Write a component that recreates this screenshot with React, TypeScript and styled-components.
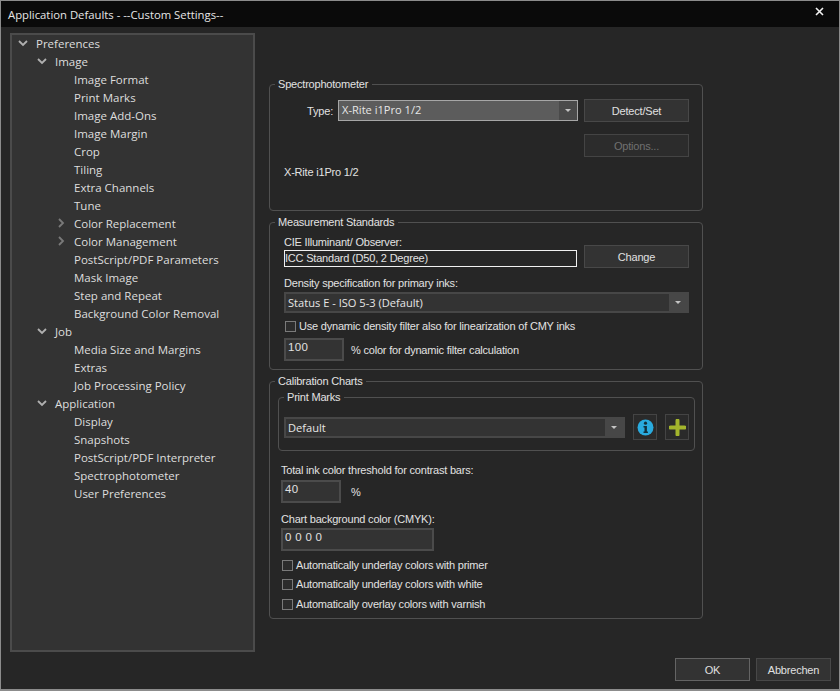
import React from "react"
import styled, { createGlobalStyle } from "styled-components"

const GlobalStyle = createGlobalStyle`
  html, body {
    margin: 0;
    padding: 0;
    background: #262626;
  }
  * {
    box-sizing: border-box;
  }
`

const Window = styled.div`
  width: 840px;
  height: 691px;
  display: flex;
  flex-direction: column;
  background: #262626;
  border: 1px solid #8c8c8c;
  border-bottom-width: 2px;
  color: #e2e2e2;
  font-family: "Liberation Sans", Arial, sans-serif;
  font-size: 11px;
  letter-spacing: -0.2px;
  overflow: hidden;
`

const TitleBar = styled.div`
  height: 26px;
  flex-shrink: 0;
  display: flex;
  align-items: center;
  justify-content: space-between;
  padding: 0 15px 0 7px;
  background: #0a0a0a;
  color: #e6e6e6;
  font-family: "Open Sans", sans-serif;
  font-size: 11.3px;
  letter-spacing: 0;
`

const CloseIcon = styled.svg`
  width: 9px;
  height: 9px;
  margin-bottom: 6px;
  stroke: #f2f2f2;
  stroke-width: 1.6;
`

const Main = styled.div`
  display: flex;
  gap: 14px;
  padding: 6px 0 0 9px;
`

const TreePanel = styled.div`
  width: 245px;
  height: 619px;
  flex-shrink: 0;
  background: #333333;
  border: 2px solid #4b4b4b;
  font-family: "Open Sans", sans-serif;
  font-size: 11.5px;
  letter-spacing: 0;
`

const TreeRow = styled.div<{ $level: number }>`
  height: 18px;
  display: flex;
  align-items: center;
  padding: 0 0 2px ${(p) => 4 + p.$level * 19}px;
  color: #dedede;
  white-space: nowrap;
`

const ArrowSlot = styled.span`
  width: 14px;
  height: 14px;
  margin-right: 6px;
  flex-shrink: 0;
  display: flex;
  align-items: center;
  justify-content: center;
`

const Chevron = styled.svg<{ $open: boolean }>`
  width: 10px;
  height: 10px;
  fill: none;
  stroke: ${(p) => (p.$open ? "#b0b0b0" : "#7a7a7a")};
  stroke-width: 1.8;
`

const Settings = styled.div`
  width: 434px;
  padding-top: 51px;
  display: flex;
  flex-direction: column;
  gap: 11px;
`

const Group = styled.section<{ $height: number }>`
  position: relative;
  height: ${(p) => p.$height}px;
  border: 1px solid #505050;
  border-radius: 4px;
`

const Legend = styled.h3`
  position: absolute;
  top: -9px;
  left: 5px;
  margin: 0;
  padding: 0 4px 0 3px;
  background: #262626;
  font-size: inherit;
  font-weight: normal;
  line-height: 16px;
  color: #e2e2e2;
`

const SpectroBody = styled.div`
  display: grid;
  grid-template-columns: 1fr 105px;
  column-gap: 6px;
  row-gap: 12px;
  padding: 14px 13px 0 14px;
`

const TypeRow = styled.div`
  display: flex;
  align-items: center;
  gap: 5px;
`

const TypeLabel = styled.span`
  width: 49px;
  text-align: right;
`

const DeviceName = styled.div`
  margin-top: -5px;
  line-height: 16px;
  grid-column: 1 / -1;
`

const MeasureBody = styled.div`
  display: flex;
  flex-direction: column;
  padding: 11px 13px 0 14px;
`

const Caption = styled.div`
  line-height: 16px;
`

const IlluminantRow = styled.div`
  display: flex;
  align-items: center;
  gap: 7px;
  margin-top: -5px;
  margin-bottom: 7px;
`

const IlluminantField = styled.div`
  flex: 1;
  height: 17px;
  margin-top: 4px;
  border: 1px solid #f0f0f0;
  line-height: 14px;
  background: #262626;
`

const Button = styled.button<{ $primary?: boolean; $width?: number }>`
  width: ${(p) => p.$width ?? 105}px;
  height: 23px;
  flex-shrink: 0;
  padding: 0;
  background: #333333;
  border: 1px solid ${(p) => (p.$primary ? "#646464" : "#484848")};
  color: #e0e0e0;
  font: inherit;
  letter-spacing: inherit;
  &:disabled {
    background: #2c2c2c;
    border-color: #444444;
    color: #707070;
  }
`

const SelectBox = styled.div<{ $focused?: boolean; $height?: number }>`
  flex: 1;
  height: ${(p) => p.$height ?? 21}px;
  display: flex;
  background: ${(p) => (p.$focused ? "#4a4a4a" : "#474747")};
  border: ${(p) => (p.$focused ? "1px solid #a6a6a6" : "2px solid #474747")};
`

const SelectValue = styled.div<{ $focused?: boolean }>`
  flex: 1;
  padding-left: ${(p) => (p.$focused ? "3px" : "2px")};
  background: ${(p) => (p.$focused ? "#5c5c5c" : "#333333")};
  font-family: "Open Sans", sans-serif;
  font-size: 11.1px;
  letter-spacing: 0;
  line-height: 17px;
  color: #e6e6e6;
`

const SelectArrow = styled.div`
  width: 18px;
  display: flex;
  align-items: center;
  justify-content: center;
  &::after {
    content: "";
    border-left: 3px solid transparent;
    border-right: 3px solid transparent;
    border-top: 3px solid #c4c4c4;
  }
`

const CheckRow = styled.label<{ $bottom?: number }>`
  display: flex;
  align-items: center;
  gap: 3px;
  height: 16px;
  margin-bottom: ${(p) => p.$bottom ?? 0}px;
  padding-left: 1px;
`

const CheckBox = styled.span`
  width: 11px;
  height: 11px;
  flex-shrink: 0;
  background: #2c2c2c;
  border: 1px solid #7a7a7a;
`

const NumberField = styled.div<{ $width?: number; $top?: number; $bottom?: number }>`
  width: ${(p) => p.$width ?? 60}px;
  height: 23px;
  flex-shrink: 0;
  margin-top: ${(p) => p.$top ?? 0}px;
  margin-bottom: ${(p) => p.$bottom ?? 0}px;
  padding-left: 2px;
  background: #333333;
  border: 2px solid #4b4b4b;
  line-height: 15px;
  font-size: 11.5px;
  letter-spacing: 0.3px;
  color: #e0e0e0;
`

const FieldRow = styled.div<{ $gap: number; $top: number; $bottom: number }>`
  display: flex;
  align-items: center;
  gap: ${(p) => p.$gap}px;
  margin-top: ${(p) => p.$top}px;
  margin-bottom: ${(p) => p.$bottom}px;
`

const ChartsBody = styled.div`
  display: flex;
  flex-direction: column;
  padding: 15px 7px 0 8px;
`

const InnerGroup = styled(Group)`
  margin-bottom: 11px;
`

const MarksRow = styled.div`
  display: flex;
  align-items: center;
  padding: 16px 5px 0 5px;
`

const IconButton = styled.div`
  width: 24px;
  height: 26px;
  margin-left: 8px;
  display: flex;
  align-items: center;
  justify-content: center;
  background: #2a2a2a;
  border: 1px solid #444444;
`

const ChartFields = styled.div`
  display: flex;
  flex-direction: column;
  padding-left: 3px;
`

const Footer = styled.div`
  display: flex;
  justify-content: flex-end;
  gap: 6px;
  padding: 6px 8px 0 0;
`

const tree: { label: string; level: number; arrow?: "open" | "closed" }[] = [
  { label: "Preferences", level: 0, arrow: "open" },
  { label: "Image", level: 1, arrow: "open" },
  { label: "Image Format", level: 2 },
  { label: "Print Marks", level: 2 },
  { label: "Image Add-Ons", level: 2 },
  { label: "Image Margin", level: 2 },
  { label: "Crop", level: 2 },
  { label: "Tiling", level: 2 },
  { label: "Extra Channels", level: 2 },
  { label: "Tune", level: 2 },
  { label: "Color Replacement", level: 2, arrow: "closed" },
  { label: "Color Management", level: 2, arrow: "closed" },
  { label: "PostScript/PDF Parameters", level: 2 },
  { label: "Mask Image", level: 2 },
  { label: "Step and Repeat", level: 2 },
  { label: "Background Color Removal", level: 2 },
  { label: "Job", level: 1, arrow: "open" },
  { label: "Media Size and Margins", level: 2 },
  { label: "Extras", level: 2 },
  { label: "Job Processing Policy", level: 2 },
  { label: "Application", level: 1, arrow: "open" },
  { label: "Display", level: 2 },
  { label: "Snapshots", level: 2 },
  { label: "PostScript/PDF Interpreter", level: 2 },
  { label: "Spectrophotometer", level: 2 },
  { label: "User Preferences", level: 2 },
]

function Select({ value, focused, height }: { value: string; focused?: boolean; height?: number }) {
  return (
    <SelectBox $focused={focused} $height={height}>
      <SelectValue $focused={focused}>{value}</SelectValue>
      <SelectArrow />
    </SelectBox>
  )
}

function Check({ label, bottom }: { label: string; bottom?: number }) {
  return (
    <CheckRow $bottom={bottom}>
      <CheckBox />
      {label}
    </CheckRow>
  )
}

export default function App() {
  return (
    <>
      <GlobalStyle />
      <Window>
        <TitleBar>
          Application Defaults - --Custom Settings--
          <CloseIcon viewBox="0 0 9 9">
            <path d="M1 1l7 7M8 1l-7 7" />
          </CloseIcon>
        </TitleBar>
        <Main>
          <TreePanel>
            {tree.map((item) => (
              <TreeRow key={item.label} $level={item.level}>
                <ArrowSlot>
                  {item.arrow && (
                    <Chevron $open={item.arrow === "open"} viewBox="0 0 10 10">
                      <path d={item.arrow === "open" ? "M1 3l4 4 4-4" : "M3 1l4 4-4 4"} />
                    </Chevron>
                  )}
                </ArrowSlot>
                {item.label}
              </TreeRow>
            ))}
          </TreePanel>
          <Settings>
            <Group $height={127}>
              <Legend>Spectrophotometer</Legend>
              <SpectroBody>
                <TypeRow>
                  <TypeLabel>Type:</TypeLabel>
                  <Select value="X-Rite i1Pro 1/2" focused height={21} />
                </TypeRow>
                <Button>Detect/Set</Button>
                <span />
                <Button disabled>Options...</Button>
                <DeviceName>X-Rite i1Pro 1/2</DeviceName>
              </SpectroBody>
            </Group>
            <Group $height={148}>
              <Legend>Measurement Standards</Legend>
              <MeasureBody>
                <Caption>CIE Illuminant/ Observer:</Caption>
                <IlluminantRow>
                  <IlluminantField>ICC Standard (D50, 2 Degree)</IlluminantField>
                  <Button>Change</Button>
                </IlluminantRow>
                <Caption>Density specification for primary inks:</Caption>
                <FieldRow $gap={0} $top={1} $bottom={5}>
                  <Select value="Status E - ISO 5-3 (Default)" />
                </FieldRow>
                <Check label="Use dynamic density filter also for linearization of CMY inks" />
                <FieldRow $gap={7} $top={4} $bottom={0}>
                  <NumberField>100</NumberField>
                  % color for dynamic filter calculation
                </FieldRow>
              </MeasureBody>
            </Group>
            <Group $height={238}>
              <Legend>Calibration Charts</Legend>
              <ChartsBody>
                <InnerGroup $height={54}>
                  <Legend>Print Marks</Legend>
                  <MarksRow>
                    <Select value="Default" />
                    <IconButton>
                      <svg width="17" height="17" viewBox="0 0 17 17">
                        <circle cx="8.5" cy="8.5" r="8" fill="#29abdf" />
                        <circle cx="8.5" cy="4.2" r="1.6" fill="#12303c" />
                        <path d="M6.5 7h3.4v5.6h1v1.4H6.5v-1.4h1V8.4h-1z" fill="#12303c" />
                      </svg>
                    </IconButton>
                    <IconButton>
                      <svg width="17" height="17" viewBox="0 0 17 17">
                        <path d="M8.5 1.5v14M1.5 8.5h14" stroke="#a3b52c" strokeWidth="4" strokeLinecap="round" />
                      </svg>
                    </IconButton>
                  </MarksRow>
                </InnerGroup>
                <ChartFields>
                  <Caption>Total ink color threshold for contrast bars:</Caption>
                  <FieldRow $gap={10} $top={2} $bottom={8}>
                    <NumberField>40</NumberField>
                    %
                  </FieldRow>
                  <Caption>Chart background color (CMYK):</Caption>
                  <NumberField $width={153} $top={1} $bottom={6}>
                    0 0 0 0
                  </NumberField>
                  <Check label="Automatically underlay colors with primer" bottom={3} />
                  <Check label="Automatically underlay colors with white" bottom={4} />
                  <Check label="Automatically overlay colors with varnish" />
                </ChartFields>
              </ChartsBody>
            </Group>
          </Settings>
        </Main>
        <Footer>
          <Button $primary $width={75}>
            OK
          </Button>
          <Button $width={75}>Abbrechen</Button>
        </Footer>
      </Window>
    </>
  )
}
